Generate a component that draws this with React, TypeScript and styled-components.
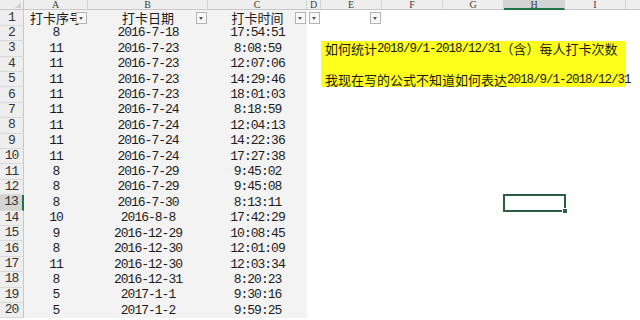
import styled, { createGlobalStyle } from "styled-components";

type Row = [string, string, string];

const DATA: Row[] = [
  ["8", "2016-7-18", "17:54:51"],
  ["11", "2016-7-23", "8:08:59"],
  ["11", "2016-7-23", "12:07:06"],
  ["11", "2016-7-23", "14:29:46"],
  ["11", "2016-7-23", "18:01:03"],
  ["11", "2016-7-24", "8:18:59"],
  ["11", "2016-7-24", "12:04:13"],
  ["11", "2016-7-24", "14:22:36"],
  ["11", "2016-7-24", "17:27:38"],
  ["8", "2016-7-29", "9:45:02"],
  ["8", "2016-7-29", "9:45:08"],
  ["8", "2016-7-30", "8:13:11"],
  ["10", "2016-8-8", "17:42:29"],
  ["9", "2016-12-29", "10:08:45"],
  ["8", "2016-12-30", "12:01:09"],
  ["11", "2016-12-30", "12:03:34"],
  ["8", "2016-12-31", "8:20:23"],
  ["5", "2017-1-1", "9:30:16"],
  ["5", "2017-1-2", "9:59:25"],
];

const LETTERS = ["A", "B", "C", "D", "E", "F", "G", "H", "I", "J"];
const ACTIVE_COL = "H";
const ACTIVE_ROW = 13;

const GlobalStyle = createGlobalStyle`
  * {
    box-sizing: border-box;
  }

  body {
    margin: 0;
    background: #fff;
    overflow: hidden;
  }
`;

const Sheet = styled.div`
  width: 640px;
  height: 320px;
  overflow: hidden;
  display: grid;
  grid-template-columns: 24px 64px 120px 99px 14px 61px 61px 61px 61px 61px 40px;
  grid-template-rows: 10.3px;
  grid-auto-rows: 15.42px;
  font-family: "Liberation Mono", monospace;
  color: #1c1c1c;
`;

const Corner = styled.div`
  position: relative;
  background: #eeeeee;
  border-right: 1px solid #c8c8c8;
  border-bottom: 1px solid #c8c8c8;

  &::after {
    content: "";
    position: absolute;
    right: 2px;
    bottom: 1px;
    border-left: 6px solid transparent;
    border-bottom: 6px solid #d2d2d2;
  }
`;

const ColHead = styled.div<{ $active?: boolean }>`
  background: ${({ $active }) => ($active ? "#d4d4d4" : "#eeeeee")};
  border-right: 1px solid #d2d2d2;
  border-bottom: ${({ $active }) =>
    $active ? "2px solid #217346" : "1px solid #c8c8c8"};
  font: 10px/10px "Liberation Serif", serif;
  color: #404040;
  text-align: center;
  overflow: hidden;
`;

const RowHead = styled.div<{ $active?: boolean }>`
  display: flex;
  align-items: center;
  justify-content: center;
  background: ${({ $active }) => ($active ? "#d4d4d4" : "#eeeeee")};
  border-right: ${({ $active }) =>
    $active ? "2px solid #217346" : "1px solid #c8c8c8"};
  border-bottom: 1px solid #d9d9d9;
  font-size: 13px;
  line-height: 14px;
  letter-spacing: -1px;
  color: #333;
`;

const Cell = styled.div<{ $shade?: boolean; $fill?: boolean; $selected?: boolean }>`
  position: relative;
  display: flex;
  align-items: center;
  justify-content: center;
  white-space: nowrap;
  font-size: 13px;
  line-height: 14px;
  letter-spacing: -1px;
  background: ${({ $shade, $fill }) =>
    $fill ? "#ffff1e" : $shade ? "#f3f3f4" : "#ffffff"};
  outline: ${({ $selected }) => ($selected ? "2px solid #2d5e45" : "none")};
  outline-offset: -1px;
  z-index: ${({ $selected }) => ($selected ? 3 : "auto")};
`;

const HeadCell = styled(Cell)`
  overflow: hidden;
`;

const Han = styled.span`
  font-family: "Noto Sans CJK SC", sans-serif;
  font-size: 13px;
  line-height: 14px;
  letter-spacing: 0;
  color: #1c1c1c;
`;

const Note = styled(Cell)`
  justify-content: flex-start;
  padding-left: 4px;
  z-index: 2;
  overflow: visible;
`;

const Num = styled.span`
  font-family: "Liberation Mono", monospace;
  font-size: 12.5px;
  line-height: 14px;
  letter-spacing: -1px;
`;

const Filter = styled.span`
  position: absolute;
  top: 2px;
  right: 1px;
  width: 11px;
  height: 12px;
  border: 1px solid #b4b4b4;
  background: #f8f8f8;

  &::after {
    content: "";
    position: absolute;
    left: 2px;
    top: 4px;
    border-left: 2.5px solid transparent;
    border-right: 2.5px solid transparent;
    border-top: 3px solid #555;
  }
`;

const Handle = styled.span`
  position: absolute;
  right: -3px;
  bottom: -3px;
  width: 6px;
  height: 6px;
  background: #2d5e45;
  border: 1px solid #fff;
`;

const YELLOW_ROWS = [3, 4, 5];
const YELLOW_COLS = ["E", "F", "G", "H", "I"];

const NOTES: Record<number, JSX.Element> = {
  3: (
    <>
      <Han>如何统计</Han>
      <Num>2018/9/1-2018/12/31</Num>
      <Han>（含）每人打卡次数</Han>
    </>
  ),
  5: (
    <>
      <Han>我现在写的公式不知道如何表达</Han>
      <Num>2018/9/1-2018/12/31</Num>
    </>
  ),
};

const TAIL = ["D", "E", "F", "G", "H", "I", "J"];

export default function App() {
  return (
    <>
      <GlobalStyle />
      <Sheet>
        <Corner />
        {LETTERS.map((l) => (
          <ColHead key={l} $active={l === ACTIVE_COL}>
            {l}
          </ColHead>
        ))}

        <RowHead>1</RowHead>
        <HeadCell $shade>
          <Han>打卡序号</Han>
          <Filter />
        </HeadCell>
        <HeadCell $shade>
          <Han>打卡日期</Han>
          <Filter />
        </HeadCell>
        <HeadCell $shade>
          <Han>打卡时间</Han>
          <Filter />
        </HeadCell>
        <Cell>
          <Filter />
        </Cell>
        <Cell>
          <Filter />
        </Cell>
        {TAIL.slice(2).map((l) => (
          <Cell key={l} />
        ))}

        {DATA.map((row, i) => {
          const n = i + 2;
          return [
            <RowHead key={`h${n}`} $active={n === ACTIVE_ROW}>
              {n}
            </RowHead>,
            ...row.map((v, j) => (
              <Cell key={`${n}-${j}`} $shade>
                {v}
              </Cell>
            )),
            ...TAIL.map((l) => {
              const fill = YELLOW_ROWS.includes(n) && YELLOW_COLS.includes(l);
              if (l === "E" && NOTES[n]) {
                return (
                  <Note key={`${n}${l}`} $fill>
                    {NOTES[n]}
                  </Note>
                );
              }
              const selected = l === ACTIVE_COL && n === ACTIVE_ROW;
              return (
                <Cell key={`${n}${l}`} $fill={fill} $selected={selected}>
                  {selected && <Handle />}
                </Cell>
              );
            }),
          ];
        })}
      </Sheet>
    </>
  );
}
